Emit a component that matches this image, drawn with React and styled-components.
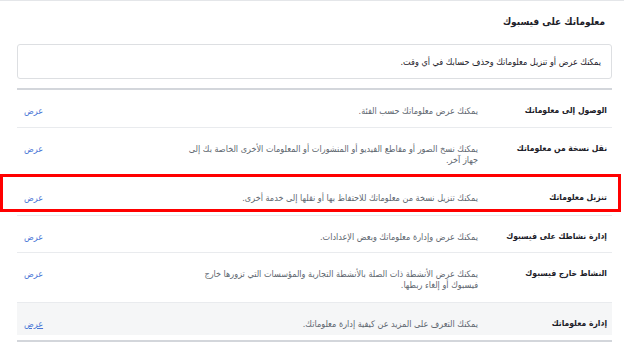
import React from 'react'
import styled, { createGlobalStyle } from 'styled-components'

const GlobalStyle = createGlobalStyle`
  html, body {
    margin: 0;
    padding: 0;
    background: #fff;
  }
  body {
    font-family: "DejaVu Sans Condensed", "DejaVu Sans", sans-serif;
  }
`

const Page = styled.div`
  direction: rtl;
  width: 624px;
  height: 354px;
  box-sizing: border-box;
  border-top: 1px solid #e4e6e9;
  padding: 13px 12px 0 0;
  overflow: hidden;
`

const Title = styled.h2`
  margin: 0;
  padding-right: 7px;
  font-size: 10px;
  font-weight: bold;
  color: #1d2129;
  line-height: 16px;
`

const Inner = styled.div`
  margin-left: 17px;
`

const InfoBox = styled.div`
  margin-top: 14px;
  height: 35px;
  box-sizing: border-box;
  border: 1px solid #dddfe2;
  border-radius: 3px;
  padding: 0 10px;
  display: flex;
  align-items: center;
  font-size: 9px;
  color: #1d2129;
`

const Table = styled.div`
  margin-top: 9px;
  border-top: 2px solid #d3d6db;
  border-bottom: 2px solid #d3d6db;
`

const Row = styled.div`
  position: relative;
  box-sizing: border-box;
  display: grid;
  grid-template-columns: 130px 300px 1fr;
  align-items: start;
  height: ${p => p.$h}px;
  padding-top: ${p => p.$pad}px;
  background: ${p => (p.$muted ? '#f5f6f7' : '#fff')};
  border-bottom: ${p => (p.$last ? 'none' : '1px solid #e9ebee')};
  margin-bottom: ${p => (p.$last ? '5px' : '0')};

  ${p =>
    p.$marked &&
    `
    &::after {
      content: '';
      position: absolute;
      top: -1px;
      bottom: 3px;
      right: -9px;
      left: -17px;
      border: 3px solid #f00;
      pointer-events: none;
    }
  `}
`

const Label = styled.div`
  margin-top: 3px;
  padding-right: 5px;
  font-size: 8.5px;
  line-height: 11px;
  font-weight: bold;
  color: #1d2129;
`

const Desc = styled.div`
  margin-top: 4px;
  padding-right: 4px;
  font-size: 9px;
  line-height: 11px;
  color: #606770;
`

const Action = styled.a`
  justify-self: end;
  margin-top: 4px;
  margin-left: 7px;
  font-size: 9px;
  line-height: 11px;
  color: #4a76d6;
  text-decoration: ${p => (p.$underline ? 'underline' : 'none')};
  cursor: pointer;
`

const rows = [
  { label: 'الوصول إلى معلوماتك', desc: 'يمكنك عرض معلوماتك حسب الفئة.', h: 38, pad: 12 },
  {
    label: 'نقل نسخة من معلوماتك',
    desc: 'يمكنك نسخ الصور أو مقاطع الفيديو أو المنشورات أو المعلومات الأخرى الخاصة بك إلى جهاز آخر.',
    h: 47,
    pad: 12,
  },
  {
    label: 'تنزيل معلوماتك',
    desc: 'يمكنك تنزيل نسخة من معلوماتك للاحتفاظ بها أو نقلها إلى خدمة أخرى.',
    h: 41,
    pad: 14,
    marked: true,
  },
  {
    label: 'إدارة نشاطك على فيسبوك',
    desc: 'يمكنك عرض وإدارة معلوماتك وبعض الإعدادات.',
    h: 37,
    pad: 12,
  },
  {
    label: 'النشاط خارج فيسبوك',
    desc: 'يمكنك عرض الأنشطة ذات الصلة بالأنشطة التجارية والمؤسسات التي تزورها خارج فيسبوك أو إلغاء ربطها.',
    h: 50,
    pad: 12,
  },
  {
    label: 'إدارة معلوماتك',
    desc: 'يمكنك التعرف على المزيد عن كيفية إدارة معلوماتك.',
    h: 32,
    pad: 12,
    muted: true,
    last: true,
  },
]

const App = () => (
  <>
    <GlobalStyle />
    <Page>
      <Title>معلوماتك على فيسبوك</Title>
      <Inner>
        <InfoBox>يمكنك عرض أو تنزيل معلوماتك وحذف حسابك في أي وقت.</InfoBox>
        <Table>
          {rows.map(row => (
            <Row
              key={row.label}
              $h={row.h}
              $pad={row.pad}
              $muted={row.muted}
              $last={row.last}
              $marked={row.marked}
            >
              <Label>{row.label}</Label>
              <Desc>{row.desc}</Desc>
              <Action $underline={row.muted}>عرض</Action>
            </Row>
          ))}
        </Table>
      </Inner>
    </Page>
  </>
)

export default App
